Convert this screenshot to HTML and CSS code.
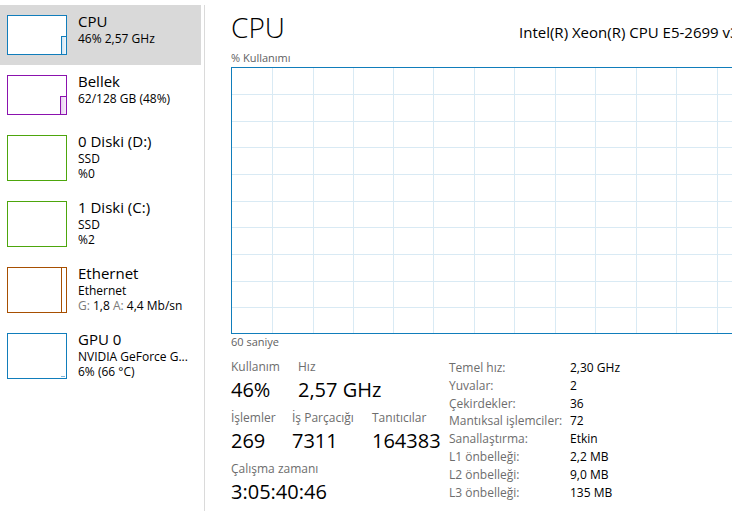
FILE: index.html
```html
<!DOCTYPE html>
<html lang="tr">
<head>
<meta charset="utf-8">
<title>Görev Yöneticisi - CPU</title>
<link rel="stylesheet" href="styles.css">
</head>
<body>
<div class="app">
  <aside class="sidebar">
    <div class="item selected">
      <div class="thumb cpu"><div class="spark cpu-spark"></div></div>
      <div class="info">
        <div class="title">CPU</div>
        <div class="sub">46% 2,57 GHz</div>
      </div>
    </div>
    <div class="item">
      <div class="thumb mem"><div class="spark mem-spark"></div></div>
      <div class="info">
        <div class="title">Bellek</div>
        <div class="sub">62/128 GB (48%)</div>
      </div>
    </div>
    <div class="item">
      <div class="thumb disk tall"></div>
      <div class="info">
        <div class="title">0 Diski (D:)</div>
        <div class="sub">SSD</div>
        <div class="sub">%0</div>
      </div>
    </div>
    <div class="item">
      <div class="thumb disk tall"></div>
      <div class="info">
        <div class="title">1 Diski (C:)</div>
        <div class="sub">SSD</div>
        <div class="sub">%2</div>
      </div>
    </div>
    <div class="item">
      <div class="thumb eth tall"><div class="spark eth-spark"></div></div>
      <div class="info">
        <div class="title">Ethernet</div>
        <div class="sub">Ethernet</div>
        <div class="sub"><span class="dim">G:</span> 1,8 <span class="dim">A:</span> 4,4 Mb/sn</div>
      </div>
    </div>
    <div class="item">
      <div class="thumb gpu tall"><div class="spark gpu-spark"></div></div>
      <div class="info">
        <div class="title">GPU 0</div>
        <div class="sub">NVIDIA GeForce G...</div>
        <div class="sub">6% (66 °C)</div>
      </div>
    </div>
  </aside>

  <main class="main">
    <div class="header">
      <h1 class="heading">CPU</h1>
      <div class="model">Intel(R) Xeon(R) CPU E5-2699 v3 @ 2.30GHz</div>
    </div>
    <div class="graph-label">% Kullanımı</div>
    <div class="graph">
      <svg class="grid" width="820" height="265" viewBox="0 0 820 265">
        <path d="M40.5 0V265M81.5 0V265M121.5 0V265M161.5 0V265M201.5 0V265M242.5 0V265M282.5 0V265M323.5 0V265M363.5 0V265M404.5 0V265M444.5 0V265M485.5 0V265M525.5 0V265M566.5 0V265M606.5 0V265M646.5 0V265M687.5 0V265M727.5 0V265M768.5 0V265M0 26.5H820M0 53.5H820M0 79.5H820M0 106.5H820M0 133.5H820M0 159.5H820M0 186.5H820M0 213.5H820M0 239.5H820" stroke="#d9eaf4" stroke-width="1" fill="none" shape-rendering="crispEdges"/>
      </svg>
    </div>
    <div class="axis">60 saniye</div>

    <div class="details">
      <div class="stats">
        <div class="stat-row">
          <div class="stat w67"><div class="label">Kullanım</div><div class="value">46%</div></div>
          <div class="stat"><div class="label">Hız</div><div class="value">2,57 GHz</div></div>
        </div>
        <div class="stat-row">
          <div class="stat w61"><div class="label">İşlemler</div><div class="value">269</div></div>
          <div class="stat w80"><div class="label">İş Parçacığı</div><div class="value">7311</div></div>
          <div class="stat"><div class="label">Tanıtıcılar</div><div class="value">164383</div></div>
        </div>
        <div class="stat-row">
          <div class="stat"><div class="label">Çalışma zamanı</div><div class="value">3:05:40:46</div></div>
        </div>
      </div>
      <dl class="specs">
        <dt>Temel hız:</dt><dd>2,30 GHz</dd>
        <dt>Yuvalar:</dt><dd>2</dd>
        <dt>Çekirdekler:</dt><dd>36</dd>
        <dt>Mantıksal işlemciler:</dt><dd>72</dd>
        <dt>Sanallaştırma:</dt><dd>Etkin</dd>
        <dt>L1 önbelleği:</dt><dd>2,2 MB</dd>
        <dt>L2 önbelleği:</dt><dd>9,0 MB</dd>
        <dt>L3 önbelleği:</dt><dd>135 MB</dd>
      </dl>
    </div>
  </main>
</div>
</body>
</html>
```

FILE: styles.css
```css
html, body {
  margin: 0;
  padding: 0;
  overflow: hidden;
  background: #ffffff;
}

body {
  font-family: "Open Sans", "Noto Sans", sans-serif;
  color: #000000;
  width: 732px;
  height: 511px;
}

.app {
  display: flex;
  height: 511px;
}

/* ---------- Sidebar ---------- */
.sidebar {
  width: 204px;
  flex: none;
  margin-top: 5px;
  border-right: 1px solid #dadada;
}

.item {
  display: flex;
  align-items: flex-start;
  padding: 10px 0 10px 7px;
  margin-right: 3px;
}

.item.selected {
  background: #d9d9d9;
}

.thumb {
  position: relative;
  box-sizing: border-box;
  width: 60px;
  height: 40px;
  flex: none;
  background: #ffffff;
  border: 1px solid #117dbb;
  overflow: hidden;
}

.thumb.tall { height: 46px; }
.thumb.cpu { border-color: #117dbb; }
.thumb.mem { border-color: #8b12ae; }
.thumb.disk { border-color: #4da60c; }
.thumb.eth { border-color: #a74f01; }
.thumb.gpu { border-color: #117dbb; }

.spark {
  position: absolute;
  right: 0;
  bottom: 0;
}

.cpu-spark {
  width: 4px;
  height: 17px;
  border-left: 1px solid #117dbb;
  border-top: 1px solid #117dbb;
  background: linear-gradient(to right, #cfe4f2, #f1f7fb);
}

.mem-spark {
  width: 5px;
  height: 17px;
  border-left: 1px solid #8b12ae;
  border-top: 1px solid #8b12ae;
  background: linear-gradient(to right, #e6d0ee, #f7eefa);
}

.eth-spark {
  width: 4px;
  height: 44px;
  border-left: 1px solid #a74f01;
}

.gpu-spark {
  width: 4px;
  height: 1px;
  right: 1px;
  border-top: 1px solid #7fb6d9;
}

.info {
  margin-top: -4px;
  margin-left: 11px;
  white-space: nowrap;
}

.title {
  font-size: 15px;
  line-height: 20px;
}

.sub {
  font-size: 12px;
  line-height: 15px;
}

.dim {
  color: #7a7a7a;
}

/* ---------- Main ---------- */
.main {
  flex: 1;
  min-width: 0;
  padding: 10px 0 0 26px;
  overflow: hidden;
}

.header {
  display: flex;
  align-items: baseline;
  height: 41px;
  white-space: nowrap;
}

.heading {
  margin: 0;
  width: 288px;
  flex: none;
  font-size: 28px;
  font-weight: 300;
  line-height: 34px;
}

.model {
  font-size: 15px;
  white-space: nowrap;
}

.graph-label {
  font-size: 11px;
  line-height: 14px;
  color: #5f5f5f;
}

.graph {
  box-sizing: border-box;
  width: 820px;
  height: 267px;
  margin-top: 2px;
  border: 1px solid #117dbb;
  background: #ffffff;
}

.grid {
  display: block;
}

.axis {
  font-size: 11px;
  line-height: 14px;
  margin-top: 1px;
  color: #5f5f5f;
}

.details {
  display: flex;
  align-items: flex-start;
  margin-top: 10px;
}

.stats {
  width: 218px;
  flex: none;
}

.stat-row {
  display: flex;
  margin-bottom: 7px;
}

.stat {
  white-space: nowrap;
}

.w67 { width: 67px; }
.w61 { width: 61px; }
.w80 { width: 80px; }

.label {
  font-size: 12px;
  line-height: 16px;
  color: #6d6d6d;
}

.value {
  margin-top: 2px;
  font-size: 20px;
  line-height: 26px;
}

.specs {
  display: grid;
  grid-template-columns: 121px auto;
  margin: 0;
  font-size: 12px;
  line-height: 17.8px;
  white-space: nowrap;
}

.specs dt {
  color: #6d6d6d;
}

.specs dd {
  margin: 0;
  color: #000000;
}
```
